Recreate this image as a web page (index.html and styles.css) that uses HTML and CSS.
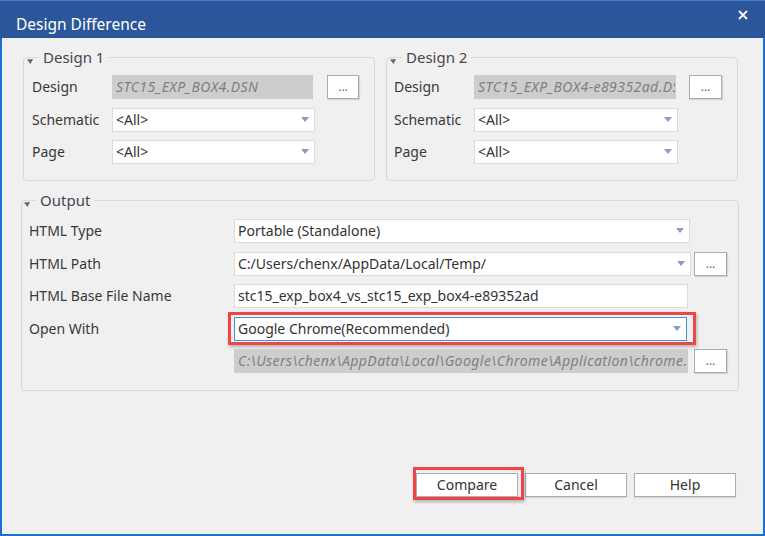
FILE: index.html
```html
<!DOCTYPE html>
<html>
<head>
<meta charset="utf-8">
<link rel="stylesheet" href="styles.css">
</head>
<body>
<div class="window">
  <div class="titlebar">
    <span class="title">Design Difference</span>
    <svg class="close" width="10" height="10" viewBox="0 0 10 10"><path d="M1 1 L9 9 M9 1 L1 9" stroke="#fff" stroke-width="1.8" fill="none"/></svg>
  </div>
  <div class="content">
    <div class="designs">
      <fieldset class="group g1">
        <legend><svg class="tri" width="6" height="5" viewBox="0 0 6 5"><polygon points="0,0.5 6,0 3.5,5" fill="#666"/></svg>Design 1</legend>
        <div class="form">
          <span class="lbl">Design</span>
          <div class="field ro w-ro"><span class="clip">STC15_EXP_BOX4.DSN</span></div>
          <button class="dots">...</button>
          <span class="lbl">Schematic</span>
          <div class="field">&lt;All&gt;<span class="arrow"></span></div>
          <span></span>
          <span class="lbl">Page</span>
          <div class="field">&lt;All&gt;<span class="arrow"></span></div>
          <span></span>
        </div>
      </fieldset>
      <fieldset class="group g2">
        <legend><svg class="tri" width="6" height="5" viewBox="0 0 6 5"><polygon points="0,0.5 6,0 3.5,5" fill="#666"/></svg>Design 2</legend>
        <div class="form">
          <span class="lbl">Design</span>
          <div class="field ro w-ro"><span class="clip">STC15_EXP_BOX4-e89352ad.DSN</span></div>
          <button class="dots">...</button>
          <span class="lbl">Schematic</span>
          <div class="field">&lt;All&gt;<span class="arrow"></span></div>
          <span></span>
          <span class="lbl">Page</span>
          <div class="field">&lt;All&gt;<span class="arrow"></span></div>
          <span></span>
        </div>
      </fieldset>
    </div>
    <fieldset class="group out">
      <legend><svg class="tri" width="6" height="5" viewBox="0 0 6 5"><polygon points="0,0.5 6,0 3.5,5" fill="#666"/></svg>Output</legend>
      <div class="oform">
        <span class="lbl">HTML Type</span>
        <div class="field">Portable (Standalone)<span class="arrow"></span></div>
        <span></span>
        <span class="lbl">HTML Path</span>
        <div class="field w-path">C:/Users/chenx/AppData/Local/Temp/<span class="arrow"></span></div>
        <button class="dots">...</button>
        <span class="lbl">HTML Base File Name</span>
        <div class="field w-base">stc15_exp_box4_vs_stc15_exp_box4-e89352ad</div>
        <span></span>
        <span class="lbl">Open With</span>
        <div class="hl w-open"><div class="field focus">Google Chrome(Recommended)<span class="arrow"></span></div></div>
        <span></span>
        <span></span>
        <div class="field ro w-base"><span class="clip">C:\Users\chenx\AppData\Local\Google\Chrome\Application\chrome.exe</span></div>
        <button class="dots">...</button>
      </div>
    </fieldset>
    <div class="actions">
      <div class="hl-btn"><button class="btn">Compare</button></div>
      <button class="btn">Cancel</button>
      <button class="btn">Help</button>
    </div>
  </div>
</div>
</body>
</html>
```
FILE: styles.css
```css
* { box-sizing: border-box; }
html, body { margin: 0; padding: 0; }
body {
  width: 765px;
  height: 536px;
  overflow: hidden;
  background: #f0f0f0;
  font-family: "Noto Sans", sans-serif;
  font-size: 14px;
  color: #333;
}
.window {
  width: 765px;
  height: 536px;
  border: 2px solid #1b6fd6;
  border-top: 0;
  background: #f0f0f0;
  display: flex;
  flex-direction: column;
}
.titlebar {
  height: 38px;
  margin: 0 -2px;
  background: #2b579a;
  border-top: 1px solid #3d7bd0;
  color: #fff;
  display: flex;
  justify-content: space-between;
  align-items: flex-start;
  padding: 12px 17px 0 16px;
}
.title {
  font-size: 15.5px;
  line-height: 22px;
}
.close {
  margin-top: -3px;
}
.content {
  padding: 9px 24px 0 19px;
}
.designs {
  display: flex;
  gap: 11px;
  margin-left: 2px;
}
.group {
  margin: 0;
  min-width: 0;
  border: 1px solid #d9d9d9;
  border-radius: 4px;
  padding: 8px 0 16px 0;
}
.g1, .g2 { width: 352px; }
legend {
  position: relative;
  font-size: 15px;
  line-height: 20px;
  padding: 0 4px;
  margin-left: 15px;
  color: #4a4550;
}
.out legend { margin-left: 14px; }
.tri {
  position: absolute;
  left: -12px;
  top: 12px;
}
.form {
  display: grid;
  grid-template-columns: 68px 203px 32px;
  column-gap: 12px;
  row-gap: 8.5px;
  grid-auto-rows: 24px;
  margin-left: 8px;
}
.g2 .form {
  grid-template-columns: 69px 204px 33px;
  column-gap: 11px;
  margin-left: 7px;
}
.lbl {
  line-height: 24px;
  white-space: nowrap;
  color: #383838;
}
.field {
  position: relative;
  height: 24px;
  line-height: 22px;
  border: 1px solid #dcdcdc;
  background: #fff;
  padding-left: 3px;
  white-space: nowrap;
  overflow: hidden;
  color: #333;
}
.field.ro {
  background: #cdcdcd;
  border-color: #cdcdcd;
  color: #808080;
  font-style: italic;
  letter-spacing: 0.45px;
}
.clip {
  display: block;
  overflow: hidden;
  white-space: nowrap;
}
.w-ro { width: calc(100% - 2px); }
.field.focus { border-color: #3c92dc; }
.arrow {
  position: absolute;
  right: 5px;
  top: 8px;
  width: 0;
  height: 0;
  border-left: 4.5px solid transparent;
  border-right: 4.5px solid transparent;
  border-top: 5px solid #8d9cc2;
}
.dots {
  height: 24px;
  padding: 0;
  background: #fff;
  border: 1px solid #acacac;
  box-shadow: 1px 1px 1px rgba(0, 0, 0, 0.12);
  font-family: "Noto Sans", sans-serif;
  font-size: 12px;
  line-height: 20px;
  color: #666;
}
.out {
  margin-top: 9px;
  padding-top: 9px;
  padding-bottom: 17px;
}
.oform {
  display: grid;
  grid-template-columns: 201px 456px 33px;
  column-gap: 4px;
  row-gap: 8.5px;
  grid-auto-rows: 24px;
  margin-left: 7px;
}
.w-path { width: 457px; }
.w-base { width: 454px; }
.w-open { width: 453px; }
.hl { position: relative; }
.hl::after {
  content: "";
  position: absolute;
  top: -5px;
  right: -9px;
  bottom: -4px;
  left: -6px;
  border: 3px solid #f04545;
  box-shadow: 1px 2px 3px rgba(0, 0, 0, 0.25);
}
.actions {
  display: flex;
  justify-content: flex-end;
  gap: 7px;
  margin-top: 82px;
  padding-right: 3px;
}
.btn {
  width: 102px;
  height: 24px;
  padding: 0;
  background: #fff;
  border: 1px solid #adadad;
  box-shadow: 0 1px 1px rgba(0, 0, 0, 0.1);
  font-family: "Noto Sans", sans-serif;
  font-size: 14px;
  line-height: 22px;
  color: #333;
}
.hl-btn { position: relative; display: flex; }
.hl-btn::after {
  content: "";
  position: absolute;
  top: -6px;
  right: -6px;
  bottom: -3px;
  left: -3px;
  border: 3px solid #f04545;
  box-shadow: 1px 2px 3px rgba(0, 0, 0, 0.25);
}
```
